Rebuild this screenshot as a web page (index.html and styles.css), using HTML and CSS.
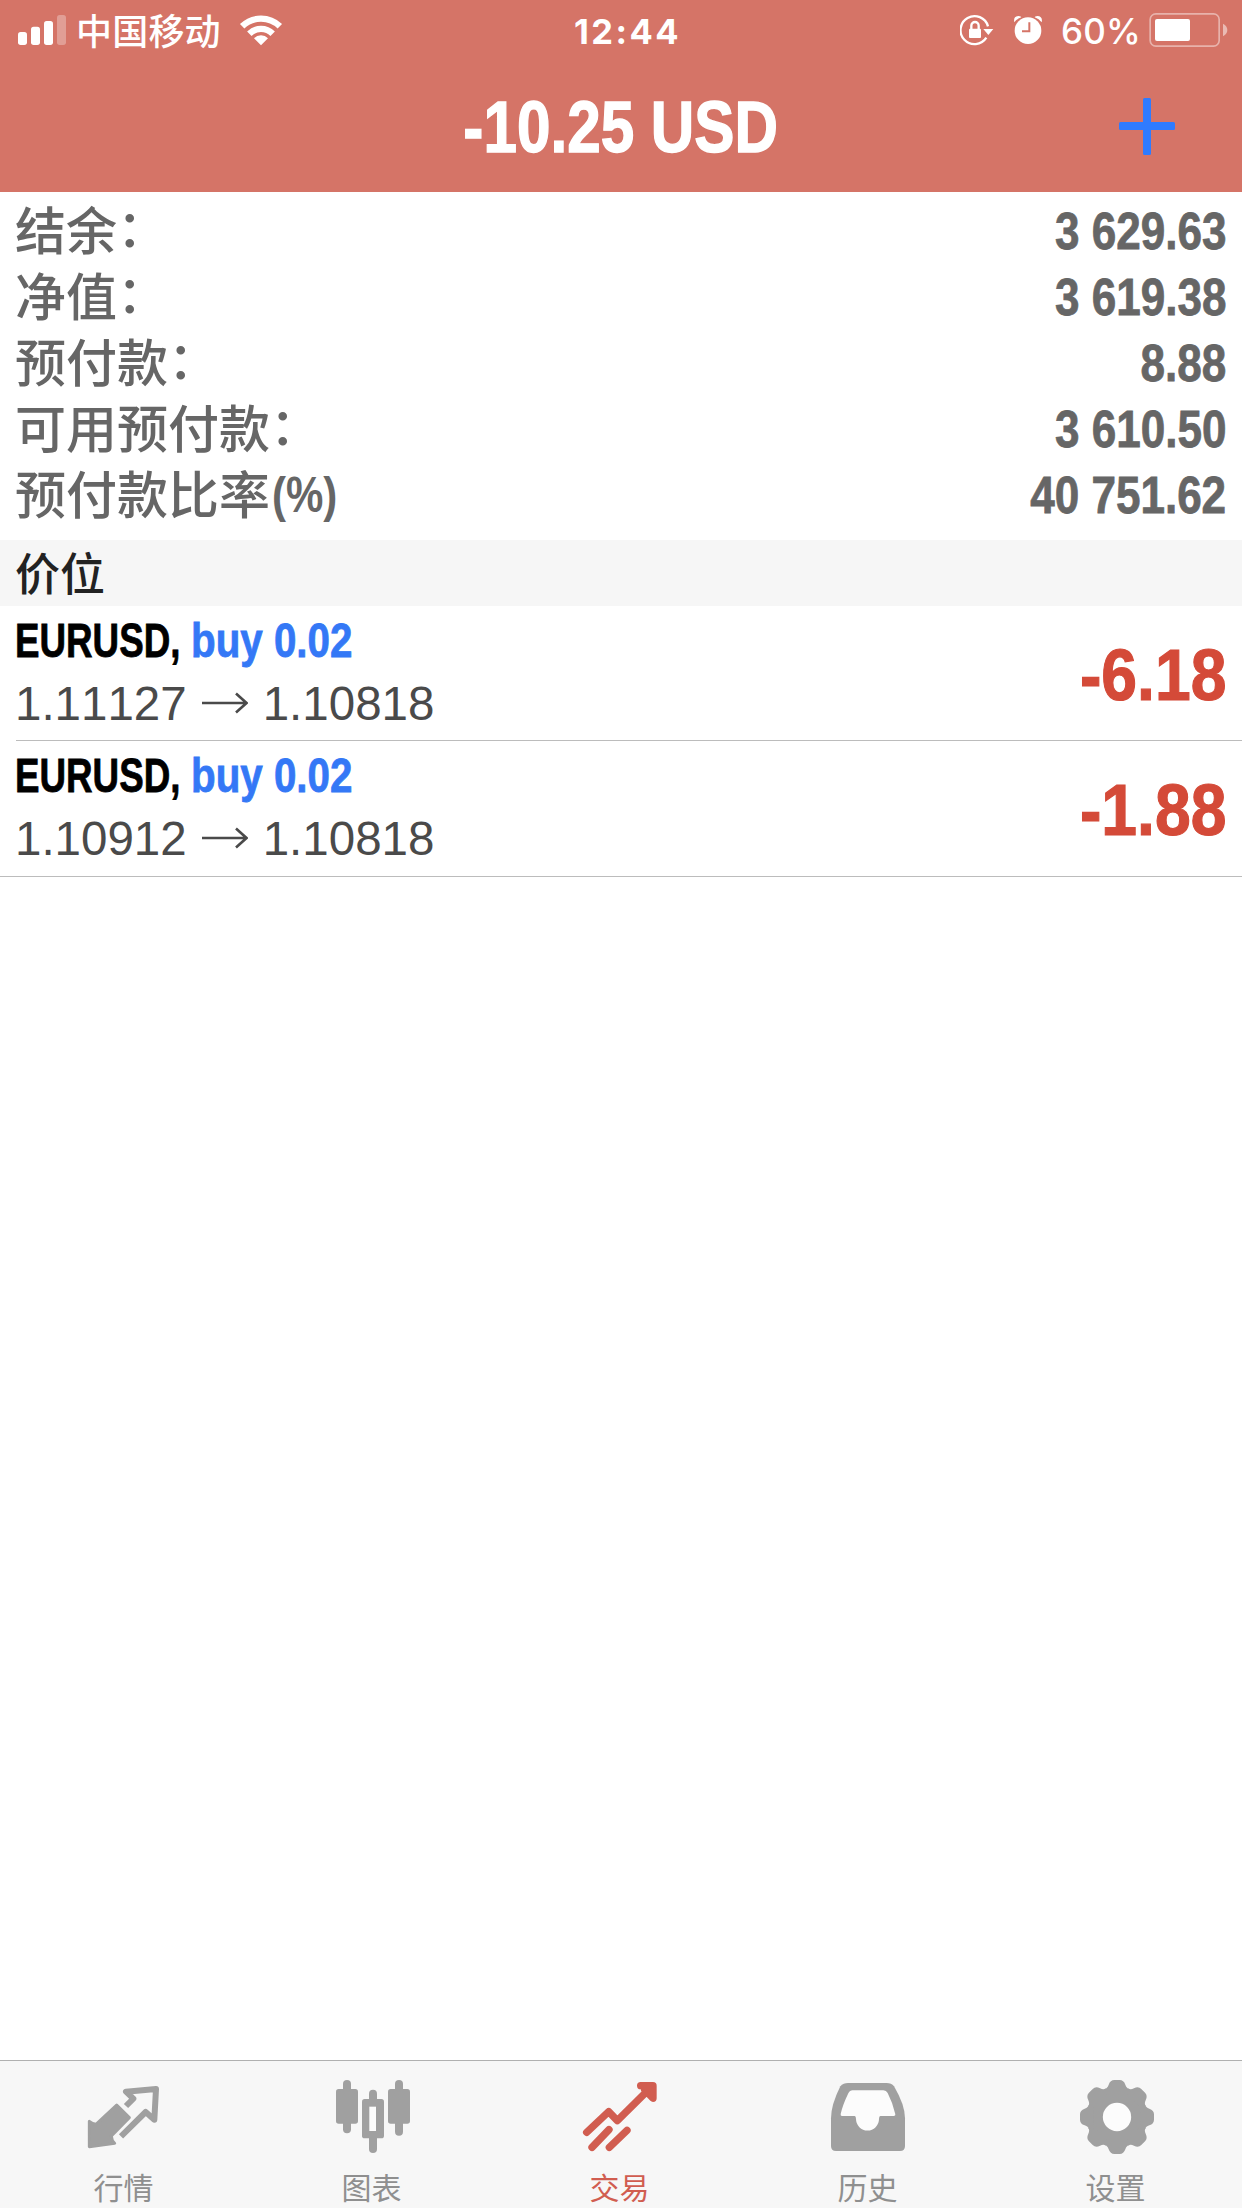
FILE: index.html
```html
<!DOCTYPE html>
<html lang="zh-CN">
<head>
<meta charset="utf-8">
<title>交易</title>
<link rel="stylesheet" href="styles.css">
</head>
<body>
<div class="app">
  <header class="header">
    <div class="status">
      <div class="status-left">
        <svg class="signal" width="48" height="60" viewBox="54 0 144 180"><rect x="54" y="96" width="27" height="39" rx="8"/><rect x="93" y="80" width="27" height="55" rx="8"/><rect x="132" y="63" width="27" height="72" rx="8"/><rect x="171" y="45" width="27" height="90" rx="8" opacity=".3"/></svg>
        <span class="carrier">中国移动</span>
        <svg width="44" height="60" viewBox="717 0 132 180"><path d="M783 136 762 115A29 29 0 0 1 804 115Z"/><path class="wifi-arc" d="M726.5 79A81 81 0 0 1 839.5 79M748 101A50 50 0 0 1 818 101"/></svg>
      </div>
      <span class="time">12:44</span>
      <div class="status-right">
        <svg class="lock" width="34" height="60" viewBox="357 0 102 180"><path class="ring" d="M436 113A42 42 0 1 1 441 79"/><path d="M427 87H457L442 105Z"/><rect x="384" y="86" width="36" height="28" rx="3"/><path class="shackle" d="M391 88V77A11 11 0 0 1 413 77V88"/></svg>
        <svg class="alarm" width="28" height="60" viewBox="519 0 84 180"><circle cx="561" cy="92" r="40"/><path d="M520 67Q516 49 533 48Q542 49 541 52Q528 56 520 67ZM602 67Q606 49 589 48Q580 49 581 52Q594 56 602 67Z"/><path class="hands" d="M565 67V94H543"/></svg>
        <span class="percent">60%</span>
        <svg width="80" height="60" viewBox="927 0 240 180"><rect class="shell" x="930.5" y="41.5" width="207" height="97" rx="17"/><rect x="945" y="57" width="105" height="66" rx="6"/><path d="M1149 71Q1162 78 1162 90T1149 109Z" opacity=".5"/></svg>
      </div>
    </div>
    <div class="titlebar">
      <h1 class="title">-10.25 USD</h1>
      <svg class="add" width="56" height="57" viewBox="0 0 56 57"><rect x="24" width="8" height="57" rx="1.5"/><rect y="24" width="56" height="8" rx="1.5"/></svg>
    </div>
  </header>

  <dl class="summary">
    <div class="line"><dt>结余<span class="colon">：</span></dt><dd>3 629.63</dd></div>
    <div class="line"><dt>净值<span class="colon">：</span></dt><dd>3 619.38</dd></div>
    <div class="line"><dt>预付款<span class="colon">：</span></dt><dd>8.88</dd></div>
    <div class="line"><dt>可用预付款<span class="colon">：</span></dt><dd>3 610.50</dd></div>
    <div class="line"><dt>预付款比率<span class="unit">(%)</span></dt><dd>40 751.62</dd></div>
  </dl>

  <h2 class="section">价位</h2>

  <ul class="positions">
    <li class="position">
      <div class="deal">
        <div class="heading"><span class="symbol">EURUSD,</span><span class="side">buy 0.02</span></div>
        <div class="prices"><span>1.11127</span><svg class="arrow" width="46" height="22" viewBox="0 0 46 22"><path d="M0 11H44M34 1.5 44.5 11 34 20.5"/></svg><span>1.10818</span></div>
      </div>
      <div class="profit">-6.18</div>
    </li>
    <li class="position">
      <div class="deal">
        <div class="heading"><span class="symbol">EURUSD,</span><span class="side">buy 0.02</span></div>
        <div class="prices"><span>1.10912</span><svg class="arrow" width="46" height="22" viewBox="0 0 46 22"><path d="M0 11H44M34 1.5 44.5 11 34 20.5"/></svg><span>1.10818</span></div>
      </div>
      <div class="profit">-1.88</div>
    </li>
  </ul>

  <nav class="tabs">
    <div class="tab">
      <svg class="icon" viewBox="0 0 252 252"><path class="quote-solid" d="M22 139Q34 148 42 148L104 90 142 128 88 183Q89 197 98 205L22 215Z"/><path class="quote-line" d="M132 93 154 71 132 50 222 42 217 134 191 111 117 184"/></svg>
      <span>行情</span>
    </div>
    <div class="tab">
      <svg class="icon" viewBox="0 0 252 252"><rect x="18" y="42" width="66" height="104" rx="8"/><rect x="39" y="15" width="24" height="160" rx="12"/><rect x="174" y="42" width="66" height="104" rx="8"/><rect x="195" y="15" width="24" height="167" rx="12"/><rect x="96" y="72" width="66" height="118" rx="8"/><rect x="117" y="44" width="24" height="190" rx="12"/><rect class="hole" x="118" y="95" width="20" height="73"/></svg>
      <span>图表</span>
    </div>
    <div class="tab active">
      <svg class="icon" viewBox="0 0 252 252"><path class="trend" d="M26 172 92 110 118 137 218 38M188 32H225V70L200 44M42 217 93 164M94 217 147 166"/></svg>
      <span>交易</span>
    </div>
    <div class="tab">
      <svg class="icon" viewBox="0 0 252 252"><path d="M66 24H182Q196 24 204 34Q237 90 237 130V213Q237 228 222 228H30Q15 228 15 213V130Q15 90 43 34Q52 24 66 24Z"/><path class="hole" d="M80 46H172Q181 46 185 54Q201 85 208 118Q209 123 203 123H163Q159 123 159 132A34.5 34.5 0 0 1 90 132Q90 123 86 123H48Q43 123 44 117Q50 90 67 55Q71 46 80 46Z"/></svg>
      <span>历史</span>
    </div>
    <div class="tab">
      <svg class="icon" viewBox="0 0 252 252"><defs><path id="tooth" d="M-36-70V-85Q-29-86-25-97Q-20-111-8-111H8Q20-111 25-97Q29-86 36-85V-70Z"/></defs><g transform="translate(129 126)"><circle r="90"/><use href="#tooth"/><use href="#tooth" transform="rotate(45)"/><use href="#tooth" transform="rotate(90)"/><use href="#tooth" transform="rotate(135)"/><use href="#tooth" transform="rotate(180)"/><use href="#tooth" transform="rotate(225)"/><use href="#tooth" transform="rotate(270)"/><use href="#tooth" transform="rotate(315)"/><circle class="hole" r="42.5"/></g></svg>
      <span>设置</span>
    </div>
  </nav>
</div>
</body>
</html>
```
FILE: styles.css
```css
* { box-sizing: border-box; margin: 0; padding: 0; }

body {
  background: #fff;
  font-family: "Liberation Sans", "Noto Sans CJK SC", sans-serif;
  font-kerning: none;
}

svg { display: block; flex: none; }

.app {
  display: flex;
  flex-direction: column;
  width: 1242px;
  height: 2208px;
  overflow: hidden;
}

.header {
  height: 192px;
  background: #d57467;
  color: #fff;
  fill: #fff;
}

.status {
  display: grid;
  grid-template-columns: 1fr auto 1fr;
  height: 60px;
  line-height: 60px;
  padding: 0 13px 0 18px;
}
.status-left, .status-right { display: flex; }
.status-right { justify-content: flex-end; }
.carrier {
  margin: 0 18px 0 10px;
  font: 500 36px/59px "Noto Sans CJK SC", sans-serif;
  letter-spacing: .2px;
}
.wifi-arc { fill: none; stroke: #fff; stroke-width: 19; }
.time {
  padding-left: 8px;
  font: 700 34.5px/63px Inter, sans-serif;
  letter-spacing: 2.4px;
}
.ring, .shackle { fill: none; stroke: #fff; stroke-width: 7; }
.hands { fill: none; stroke: #d57467; stroke-width: 6; }
.lock { margin-right: 20px; }
.alarm { margin-right: 19px; }
.percent {
  width: 88px;
  font: 500 35px/63px Inter, sans-serif;
  letter-spacing: .2px;
}
.shell { fill: none; stroke: #fff; stroke-width: 5; stroke-opacity: .45; }

.titlebar {
  display: grid;
  grid-template-columns: 1fr auto 1fr;
  height: 132px;
  padding: 0 67px;
}
/* Condensed bold numerals: regular-width bold, narrowed horizontally. */
.title {
  grid-column: 2;
  font: 700 73px/134px "Liberation Sans", sans-serif;
  transform: scaleX(.825);
  -webkit-text-stroke: 1.4px;
}
.add { justify-self: end; margin-top: 38px; fill: #2f7bff; }

.summary { height: 348px; padding: 6px 16px 0 15px; color: #666; }
.line { display: flex; justify-content: space-between; height: 66px; }
.line dt { font: 500 51px/61px "Noto Sans CJK SC", sans-serif; }
.line dd {
  font: 700 51.5px/66px "Liberation Sans", sans-serif;
  transform: scaleX(.855);
  transform-origin: right;
  -webkit-text-stroke: .8px;
}
.colon, .unit { display: inline-block; height: 61px; vertical-align: top; }
.colon { transform: translate(0, -3px); }
.unit {
  font: 700 50px/67px "Liberation Sans", sans-serif;
  transform: translateX(2px) scaleX(.84);
  transform-origin: left;
}

.section {
  height: 66px;
  padding-left: 15px;
  background: #f6f6f6;
  color: #222;
  font: 500 45px/64px "Noto Sans CJK SC", sans-serif;
}

.positions { flex: 1; list-style: none; }
.position {
  display: flex;
  justify-content: space-between;
  height: 135px;
  margin-left: 16px;
  padding-right: 16px;
  border-bottom: 1px solid #bcbcbc;
}
.position:last-child {
  height: 136px;
  margin-left: 0;
  padding-left: 16px;
}
.heading {
  display: flex;
  height: 66px;
  font: 700 49px/68px "Liberation Sans", sans-serif;
  white-space: nowrap;
  -webkit-text-stroke: .8px;
}
.symbol, .side { transform-origin: left; }
.symbol { width: 175px; transform: translateX(-1px) scaleX(.75); }
.side { color: #3478f6; transform: scaleX(.823); }
.prices {
  display: flex;
  align-items: center;
  height: 62px;
  margin-left: -1px;
  color: #4a4a4a;
  font-size: 47.5px;
}
.arrow { margin: 0 15px; fill: none; stroke: #4a4a4a; stroke-width: 2.6; }
.profit {
  color: #d44a38;
  font: 700 73px/138px "Liberation Sans", sans-serif;
  transform: scaleX(.88);
  transform-origin: right;
  -webkit-text-stroke: 1.2px;
}

.tabs {
  display: grid;
  grid-template-columns: repeat(5, 248px);
  height: 148px;
  border-top: 1px solid #b0b0b0;
  background: #f7f7f7;
}
.tab {
  display: flex;
  flex-direction: column;
  align-items: center;
  padding-top: 14px;
  color: #8f8f8f;
  fill: #a0a0a0;
  font: 400 30px/54px "Noto Sans CJK SC", sans-serif;
}
.tab span { margin-right: 1px; }
.icon { width: 84px; height: 84px; }
.active { color: #d15d50; }
.hole { fill: #fcfcfc; }
.quote-solid { stroke: #a0a0a0; stroke-width: 9; stroke-linejoin: round; }
.quote-line { fill: none; stroke: #a0a0a0; stroke-width: 18; stroke-linejoin: round; }
.trend { fill: none; stroke: #d15d50; stroke-width: 22; stroke-linecap: round; stroke-linejoin: round; }
```
